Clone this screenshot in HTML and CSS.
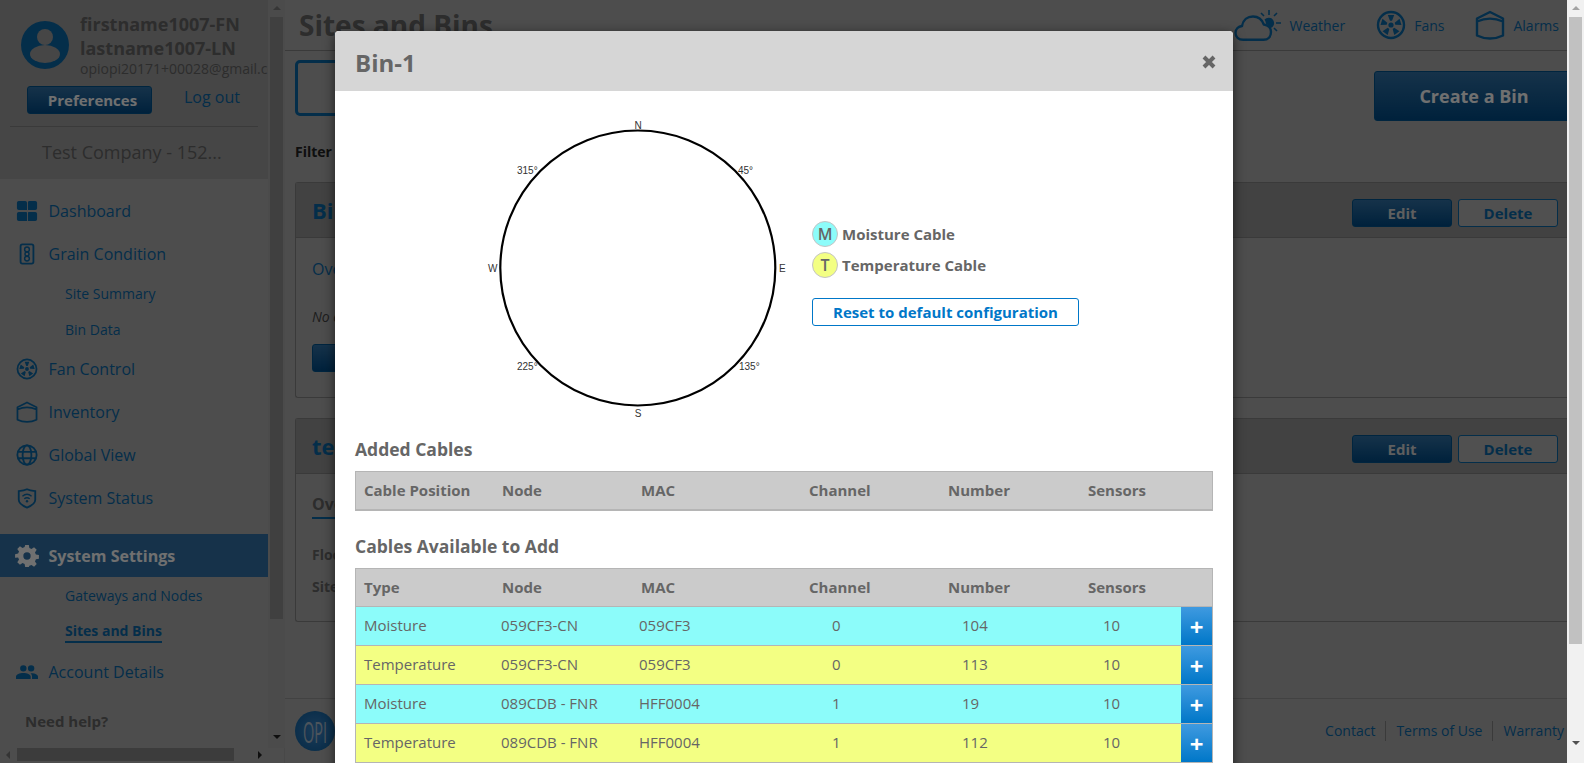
FILE: index.html
```html
<!DOCTYPE html>
<html lang="en-us">
  <head>
    <meta charset="utf-8">
    <title>Sites and Bins</title>
    <link rel="stylesheet" href="styles.css">
  </head>
  <body>
    <svg class="sprites" width="0" height="0">
      <symbol id="i-fan" viewBox="0 0 30 30">
        <circle cx="15" cy="15" r="13" fill="none" stroke="currentColor" stroke-width="2.4"/>
        <circle cx="15" cy="15" r="2.6" fill="currentColor"/>
        <g fill="currentColor">
          <path id="blade" d="M14 10.800 11.800 5H18.200L16 10.800Z"/>
          <use href="#blade" transform="rotate(72 15 15)"/>
          <use href="#blade" transform="rotate(144 15 15)"/>
          <use href="#blade" transform="rotate(216 15 15)"/>
          <use href="#blade" transform="rotate(288 15 15)"/>
        </g>
      </symbol>
      <symbol id="i-bin" viewBox="0 0 30 30">
        <path fill="none" stroke="currentColor" stroke-width="2.4" stroke-linejoin="round" d="M2 8.500 15 2 28 8.500V25.500C24 27.500 20 28.500 15 28.500S6 27.500 2 25.500ZM2 11.500C10 8 20 8 28 11.500"/>
      </symbol>
    </svg>

    <div class="window">
      <div class="page">
        <aside class="sidebar">
          <div class="sidebar-row">
            <div class="sidebar-inner">
              <div class="user-block">
                <div class="user-top">
                  <svg class="avatar" viewBox="0 0 48 48">
                    <circle cx="24" cy="24" r="24" fill="#0b69a8"/>
                    <circle cx="24" cy="16" r="8" fill="#a0a0a0"/>
                    <ellipse cx="24" cy="33" rx="15" ry="9" fill="#a0a0a0"/>
                  </svg>
                  <div class="user-text">
                    <div class="user-name">firstname1007-FN</div>
                    <div class="user-name">lastname1007-LN</div>
                    <div class="user-mail">opiopi20171+00028@gmail.com</div>
                  </div>
                </div>
                <div class="user-actions">
                  <a class="btn btn-fill btn-pref">Preferences</a>
                  <a class="logout">Log out</a>
                </div>
                <div class="user-rule"></div>
                <div class="company">Test Company - 152...</div>
              </div>

              <nav class="nav">
                <a class="nav-item">
                  <svg class="nav-icon" viewBox="0 0 24 24"><path fill="currentColor" d="M3 1h7a2 2 0 0 1 2 2v8H3a2 2 0 0 1-2-2V3a2 2 0 0 1 2-2zM14 1h7a2 2 0 0 1 2 2v6a2 2 0 0 1-2 2h-7a1 1 0 0 1-1-1V3a2 2 0 0 1 1-2zM3 13h8a1 1 0 0 1 1 1v9H3a2 2 0 0 1-2-2v-6a2 2 0 0 1 2-2zM14 13h7a2 2 0 0 1 2 2v6a2 2 0 0 1-2 2h-8v-9a1 1 0 0 1 1-1z"/></svg>
                  Dashboard
                </a>
                <a class="nav-item">
                  <svg class="nav-icon" viewBox="0 0 24 24"><rect x="5" y="1.500" width="14" height="21" rx="2" fill="none" stroke="currentColor" stroke-width="2"/><circle cx="12" cy="7" r="2.600" fill="none" stroke="currentColor" stroke-width="1.600"/><circle cx="12" cy="12" r="2.200" fill="none" stroke="currentColor" stroke-width="1.600"/><circle cx="12" cy="17" r="2.600" fill="none" stroke="currentColor" stroke-width="1.600"/></svg>
                  Grain Condition
                </a>
                <a class="nav-sub">Site Summary</a>
                <a class="nav-sub">Bin Data</a>
                <a class="nav-item">
                  <svg class="nav-icon"><use href="#i-fan"/></svg>
                  Fan Control
                </a>
                <a class="nav-item">
                  <svg class="nav-icon"><use href="#i-bin"/></svg>
                  Inventory
                </a>
                <a class="nav-item">
                  <svg class="nav-icon" viewBox="0 0 24 24"><g fill="none" stroke="currentColor" stroke-width="2"><circle cx="12" cy="12" r="10.500"/><ellipse cx="12" cy="12" rx="4.800" ry="10.500"/><path d="M2 8.500h20M2 15.500h20"/></g></svg>
                  Global View
                </a>
                <a class="nav-item">
                  <svg class="nav-icon" viewBox="0 0 24 24"><path fill="none" stroke="currentColor" stroke-width="2" d="M3 4.500C9 4 12 2.500 12 2.500S15 4 21 4.500V14c0 4-4 6.500-9 8.500-5-2-9-4.500-9-8.500z"/><path fill="none" stroke="currentColor" stroke-width="1.500" d="M7 10c3-2.500 7-2.500 10 0M9 12.800c2-1.400 4-1.400 6 0"/><circle cx="12" cy="15.500" r="1.300" fill="currentColor"/></svg>
                  System Status
                </a>
                <a class="nav-item nav-active">
                  <svg class="nav-icon" viewBox="0 0 24 24"><path fill="currentColor" fill-rule="evenodd" d="M10 0h4l.6 3.300 2.300 1 2.800-1.900 2.900 2.900-1.900 2.800 1 2.300 3.300.6v4l-3.300.6-1 2.300 1.900 2.800-2.900 2.900-2.800-1.900-2.300 1L14 24h-4l-.6-3.300-2.300-1-2.800 1.900-2.900-2.900 1.900-2.800-1-2.300L-1 14v-4l3.300-.6 1-2.300L1.400 4.300 4.300 1.400l2.800 1.900 2.300-1zM12 8a4 4 0 1 0 0 8 4 4 0 0 0 0-8z"/></svg>
                  System Settings
                </a>
                <a class="nav-sub nav-sub-tall">Gateways and Nodes</a>
                <a class="nav-sub"><span class="nav-current">Sites and Bins</span></a>
                <a class="nav-item">
                  <svg class="nav-icon" viewBox="0 0 24 24"><path fill="currentColor" d="M8 4.500a3.500 3.500 0 1 1 0 7 3.500 3.500 0 0 1 0-7zM16.500 4.500a3.500 3.500 0 1 1 0 7 3.500 3.500 0 0 1 0-7zM0 19.500v-2.500c0-2.500 4-4 8-4s8 1.500 8 4v2.500zM17.500 19.500V17c0-1.500-.6-2.700-1.700-3.700 4-.4 8.200 1.100 8.200 3.700v2.500z"/></svg>
                  Account Details
                </a>
                <div class="need-help">Need help?</div>
              </nav>
            </div>
            <div class="vscroll">
              <span class="arrow arrow-up"></span>
              <span class="vscroll-thumb"></span>
              <span class="arrow arrow-down"></span>
            </div>
          </div>
          <div class="hscroll">
            <span class="arrow arrow-left"></span>
            <span class="hscroll-thumb"></span>
            <span class="arrow arrow-right"></span>
          </div>
        </aside>

        <main class="main">
          <header class="topbar">
            <h1 class="page-title">Sites and Bins</h1>
            <div class="top-links">
              <a class="top-link">
                <svg class="weather-icon" viewBox="0 0 47 31">
                  <g fill="none" stroke="currentColor" stroke-width="2.400">
                    <path stroke-linejoin="round" d="M9 29.800C4.500 29.800 1.500 27 1.500 23S4.500 16.500 8 16C9 10 13.500 6.500 19 6.500c5 0 9 3 10.800 8C34 15 37 18 37 22 37 26.500 34 29.800 29.500 29.800Z"/>
                    <path stroke-width="1.600" d="M35 0v5M27 3l3 3M47 13h-5M43 3l-3 3M43 21l-3-3"/>
                  </g>
                  <path fill="currentColor" d="M30.500 9.500A5.500 5.500 0 1 1 36 18.500C35.200 16.500 34 15 32 13.800 31.800 12.300 31.300 10.800 30.500 9.500Z"/>
                </svg>
                Weather
              </a>
              <a class="top-link">
                <svg class="top-icon"><use href="#i-fan"/></svg>
                Fans
              </a>
              <a class="top-link">
                <svg class="top-icon"><use href="#i-bin"/></svg>
                Alarms
              </a>
            </div>
          </header>

          <div class="toolbar">
            <div class="tab-box"></div>
            <a class="btn btn-fill btn-create">Create a Bin</a>
          </div>
          <div class="filter-label">Filter</div>

          <section class="panel">
            <div class="panel-head">
              <h2 class="panel-title">Bin-1</h2>
              <a class="btn btn-fill btn-small">Edit</a>
              <a class="btn btn-line btn-small">Delete</a>
            </div>
            <div class="panel-body body-first">
              <a class="overview-link">Overview</a>
              <p class="panel-note">No cables</p>
              <a class="btn btn-fill btn-add">Add</a>
            </div>
          </section>

          <section class="panel">
            <div class="panel-head">
              <h2 class="panel-title">test</h2>
              <a class="btn btn-fill btn-small">Edit</a>
              <a class="btn btn-line btn-small">Delete</a>
            </div>
            <div class="panel-body body-second">
              <span class="overview-tab">Overview</span>
              <div class="panel-field">Floor</div>
              <div class="panel-field">Site</div>
            </div>
          </section>

          <footer class="footer">
            <div class="logo"><span class="logo-text">OPI</span></div>
            <div class="footer-links">
              <a class="footer-link">Contact</a>
              <a class="footer-link">Terms of Use</a>
              <a class="footer-link">Warranty</a>
            </div>
          </footer>
        </main>

        <div class="backdrop"></div>

        <div class="modal">
          <div class="modal-header">
            <h3 class="modal-title">Bin-1</h3>
            <svg class="modal-close" viewBox="0 0 14 14"><path d="M2 2 12 12M12 2 2 12" stroke="#666" stroke-width="4" fill="none"/></svg>
          </div>
          <div class="modal-body">
            <div class="compass-row">
              <svg class="compass" width="320" height="320" viewBox="0 0 320 320">
                <circle cx="157.800" cy="158" r="137.500" fill="none" stroke="#000" stroke-width="2.200"/>
                <g class="compass-label">
                  <text x="158" y="19" text-anchor="middle">N</text>
                  <text x="158" y="307" text-anchor="middle">S</text>
                  <text x="8" y="162">W</text>
                  <text x="299" y="162">E</text>
                  <text x="37" y="64">315°</text>
                  <text x="258" y="64">45°</text>
                  <text x="37" y="260">225°</text>
                  <text x="259" y="260">135°</text>
                </g>
              </svg>
              <div class="legend">
                <div class="legend-row"><span class="legend-dot dot-m">M</span>Moisture Cable</div>
                <div class="legend-row"><span class="legend-dot dot-t">T</span>Temperature Cable</div>
                <a class="reset-btn">Reset to default configuration</a>
              </div>
            </div>

            <h4 class="section-title">Added Cables</h4>
            <table class="cable-table table-added">
              <colgroup>
                <col class="col-type"><col class="col-node"><col class="col-mac"><col class="col-channel"><col class="col-number"><col class="col-sensors"><col class="col-add">
              </colgroup>
              <thead>
                <tr><th>Cable Position</th><th>Node</th><th>MAC</th><th>Channel</th><th>Number</th><th>Sensors</th><th></th></tr>
              </thead>
            </table>

            <h4 class="section-title section-second">Cables Available to Add</h4>
            <table class="cable-table">
              <colgroup>
                <col class="col-type"><col class="col-node"><col class="col-mac"><col class="col-channel"><col class="col-number"><col class="col-sensors"><col class="col-add">
              </colgroup>
              <thead>
                <tr><th>Type</th><th>Node</th><th>MAC</th><th>Channel</th><th>Number</th><th>Sensors</th><th></th></tr>
              </thead>
              <tbody>
                <tr class="row-m"><td>Moisture</td><td class="td-node">059CF3-CN</td><td class="td-mac">059CF3</td><td class="td-channel">0</td><td class="td-number">104</td><td class="td-sensors">10</td><td class="td-add"><span class="add-btn">+</span></td></tr>
                <tr class="row-t"><td>Temperature</td><td class="td-node">059CF3-CN</td><td class="td-mac">059CF3</td><td class="td-channel">0</td><td class="td-number">113</td><td class="td-sensors">10</td><td class="td-add"><span class="add-btn">+</span></td></tr>
                <tr class="row-m"><td>Moisture</td><td class="td-node">089CDB - FNR</td><td class="td-mac">HFF0004</td><td class="td-channel">1</td><td class="td-number">19</td><td class="td-sensors">10</td><td class="td-add"><span class="add-btn">+</span></td></tr>
                <tr class="row-t"><td>Temperature</td><td class="td-node">089CDB - FNR</td><td class="td-mac">HFF0004</td><td class="td-channel">1</td><td class="td-number">112</td><td class="td-sensors">10</td><td class="td-add"><span class="add-btn">+</span></td></tr>
              </tbody>
            </table>
          </div>
        </div>
      </div>

      <div class="window-scroll">
        <span class="arrow arrow-up"></span>
        <span class="window-thumb"></span>
        <span class="arrow arrow-down"></span>
      </div>
    </div>
  </body>
</html>
```

FILE: styles.css
```css
* {
  box-sizing: border-box;
}
html, body {
  margin: 0;
  padding: 0;
  height: 763px;
  overflow: hidden;
}
body {
  background-color: #b0b0b0;
  color: #666;
  font-family: "Open Sans", "Liberation Sans", sans-serif;
  font-size: 15px;
}
.sprites {
  position: absolute;
}
.window {
  display: flex;
  height: 763px;
}
.page {
  position: relative;
  display: flex;
  flex: 1;
  min-width: 0;
  overflow: hidden;
}

/* sidebar */
.sidebar {
  width: 285px;
  flex-shrink: 0;
  display: flex;
  flex-direction: column;
  border-right: 1px solid #a4a4a4;
}
.sidebar-row {
  display: flex;
  height: 748px;
}
.sidebar-inner {
  width: 268px;
  overflow: hidden;
  flex-shrink: 0;
}
.user-block {
  height: 179px;
  background-color: #a0a0a0;
  padding-top: 12px;
}
.user-top {
  display: flex;
  gap: 11px;
  padding-left: 21px;
  white-space: nowrap;
}
.avatar {
  width: 48px;
  height: 48px;
  margin-top: 9px;
  flex-shrink: 0;
}
.user-name {
  font-size: 18px;
  font-weight: 700;
  line-height: 24px;
}
.user-mail {
  font-size: 14px;
  line-height: 18px;
}
.user-actions {
  display: flex;
  align-items: flex-start;
  margin-top: 8px;
  padding-left: 27px;
}
.btn {
  display: flex;
  align-items: center;
  justify-content: center;
  border-radius: 3px;
  font-size: 15px;
  font-weight: 700;
  flex-shrink: 0;
}
.btn-fill {
  background: linear-gradient(#3273a8, #004c88);
  color: #d8d8d8;
  border: 1px solid #00568f;
}
.btn-line {
  background-color: #b6b6b6;
  color: #0b69a8;
  border: 1px solid #0b69a8;
}
.btn-pref {
  width: 125px;
  height: 28px;
  padding-left: 6px;
  color: #fff;
}
.logout {
  color: #0b69a8;
  font-size: 16px;
  margin-left: 32px;
  line-height: 22px;
}
.user-rule {
  height: 1px;
  background-color: #848484;
  margin: 12px 10px 0;
}
.company {
  color: #666;
  font-size: 18px;
  line-height: 24px;
  margin-top: 13px;
  padding-left: 42px;
}
.nav {
  display: flex;
  flex-direction: column;
  padding-top: 10px;
}
.nav-item {
  display: flex;
  align-items: center;
  height: 43px;
  padding-left: 16px;
  gap: 10.500px;
  color: #0b69a8;
  font-size: 16px;
  white-space: nowrap;
}
.nav-icon {
  width: 22px;
  height: 22px;
  flex-shrink: 0;
  overflow: visible;
}
.nav-active {
  margin-top: 15px;
  background-color: #3273a8;
  color: #fff;
  font-weight: 700;
}
.nav-sub {
  display: flex;
  align-items: center;
  height: 36px;
  padding-left: 65px;
  color: #0b69a8;
  font-size: 14px;
}
.nav-sub-tall {
  height: 37px;
}
.nav-current {
  font-weight: 700;
  border-bottom: 2px solid #0b69a8;
  line-height: 20px;
}
.need-help {
  margin: 17px 0 0 25px;
  font-size: 15px;
  font-weight: 700;
  line-height: 22px;
}

/* scrollbars */
.vscroll {
  width: 17px;
  flex-shrink: 0;
  display: flex;
  flex-direction: column;
  align-items: center;
  background-color: #aaa;
  padding: 6px 0 9px;
}
.vscroll-thumb {
  width: 13px;
  height: 602px;
  margin-top: 7px;
  background-color: #929292;
}
.vscroll .arrow-down {
  margin-top: auto;
}
.hscroll {
  display: flex;
  align-items: center;
  justify-content: space-between;
  width: 268px;
  height: 13px;
  padding: 0 6px;
  background-color: #b0b0b0;
}
.hscroll-thumb {
  width: 217px;
  height: 13px;
  background-color: #8a8a8a;
  margin-right: 18px;
}
.arrow {
  display: block;
  width: 0;
  height: 0;
  flex-shrink: 0;
  border: 4px solid transparent;
}
.arrow-up {
  border-top-width: 0;
  border-bottom: 4px solid #7c7c7c;
}
.arrow-down {
  border-bottom-width: 0;
  border-top: 4px solid #222;
}
.arrow-left {
  border-left-width: 0;
  border-right: 4px solid #777;
}
.arrow-right {
  border-right-width: 0;
  border-left: 4px solid #222;
}
.window-scroll {
  width: 17px;
  flex-shrink: 0;
  display: flex;
  flex-direction: column;
  align-items: center;
  background-color: #f1f1f1;
  padding-top: 6px;
}
.window-scroll .arrow-up {
  border-bottom-color: #a3a3a3;
}
.window-scroll .arrow-down {
  margin-top: 97px;
  border-top-color: #505050;
}
.window-thumb {
  width: 13px;
  height: 627px;
  margin-top: 7px;
  background-color: #c1c1c1;
}

/* main page under the dialog */
.main {
  flex: 1;
  min-width: 0;
  display: flex;
  flex-direction: column;
  overflow: hidden;
}
.topbar {
  display: flex;
  justify-content: space-between;
  align-items: center;
  height: 51px;
  flex-shrink: 0;
  padding: 0 8px 0 14px;
  border-bottom: 1px solid #848484;
}
.page-title {
  margin: 0;
  font-size: 28px;
  font-weight: 700;
  white-space: nowrap;
}
.top-links {
  display: flex;
  gap: 31px;
}
.top-link {
  display: flex;
  align-items: center;
  gap: 8px;
  color: #0b69a8;
  font-size: 14px;
}
.weather-icon {
  width: 47px;
  height: 31px;
}
.top-icon {
  width: 30px;
  height: 30px;
}
.toolbar {
  display: flex;
  justify-content: space-between;
  align-items: flex-start;
  height: 90px;
  flex-shrink: 0;
  padding: 9px 0 0 10px;
}
.tab-box {
  width: 160px;
  height: 56px;
  border: 3px solid #0b69a8;
  border-radius: 5px;
}
.btn-create {
  width: 200px;
  height: 50px;
  margin: 11px -7px 0 0;
  font-size: 18px;
  color: #fff;
}
.filter-label {
  height: 22px;
  margin: 0 0 19px 10px;
  font-size: 14px;
  font-weight: 700;
  line-height: 22px;
  color: #222;
  flex-shrink: 0;
}
.panel {
  margin-left: 10px;
  flex-shrink: 0;
  border: 1px solid #848484;
  border-right: 0;
  border-radius: 3px 0 0 3px;
}
.panel + .panel {
  margin-top: 20px;
}
.panel-head {
  display: flex;
  align-items: center;
  gap: 6px;
  height: 55px;
  padding: 6px 9px 0 16px;
  background-color: #969696;
  border-bottom: 1px solid #848484;
}
.panel-title {
  flex: 1;
  margin: -6px 0 0;
  font-size: 22px;
  font-weight: 700;
  color: #0b69a8;
}
.btn-small {
  width: 100px;
  height: 28px;
}
.panel-body {
  padding-left: 16px;
}
.body-first {
  height: 159px;
  padding-top: 19px;
}
.overview-link {
  display: block;
  color: #0b69a8;
  font-size: 16px;
  line-height: 24px;
}
.panel-note {
  margin: 25px 0 0;
  font-size: 14px;
  font-style: italic;
  line-height: 22px;
  color: #444;
}
.btn-add {
  width: 100px;
  height: 28px;
  margin-top: 16px;
}
.body-second {
  height: 147px;
  padding-top: 18px;
}
.overview-tab {
  display: inline-block;
  font-size: 16px;
  font-weight: 700;
  line-height: 18px;
  padding: 3px 0 4px;
  border-bottom: 2px solid #0b69a8;
}
.panel-field {
  margin-top: 10px;
  font-size: 14px;
  font-weight: 700;
  line-height: 22px;
}
.panel-field:first-of-type {
  margin-top: 25px;
}
.footer {
  display: flex;
  align-items: center;
  justify-content: space-between;
  height: 65px;
  margin-top: auto;
  padding: 0 3px 0 10px;
  border-top: 1px solid #969696;
}
.logo {
  display: flex;
  align-items: center;
  justify-content: center;
  width: 40px;
  height: 40px;
  border-radius: 50%;
  background: radial-gradient(#3f86c8, #0b5f9e);
}
.logo-text {
  color: #b0c0d0;
  font-size: 29px;
  transform: scaleX(.5);
}
.footer-links {
  display: flex;
  align-items: center;
}
.footer-link {
  color: #0b69a8;
  font-size: 14px;
  padding: 0 10px;
  line-height: 20px;
  border-left: 1px solid #848484;
}
.footer-link:first-child {
  border-left: 0;
}
.footer-link:last-child {
  padding-right: 0;
}

/* dialog */
.backdrop {
  position: absolute;
  inset: 0;
  background-color: rgba(0, 0, 0, .56);
}
.modal {
  position: absolute;
  top: 31px;
  left: 335px;
  width: 898px;
  height: 760px;
  background-color: #fff;
  border-radius: 4px 4px 0 0;
  box-shadow: 0 3px 12px rgba(0, 0, 0, .6);
}
.modal-header {
  display: flex;
  align-items: center;
  justify-content: space-between;
  height: 60px;
  padding: 0 17px 0 20px;
  background-color: #d6d6d6;
  border-radius: 4px 4px 0 0;
}
.modal-title {
  margin: 2px 0 0;
  font-size: 24px;
  font-weight: 700;
  color: #666;
}
.modal-close {
  width: 14px;
  height: 14px;
  margin-top: 2px;
}
.modal-body {
  padding: 19px 20px 0;
}
.compass-row {
  display: flex;
  margin-left: 125px;
  gap: 12px;
}
.compass {
  flex-shrink: 0;
}
.compass-label {
  font-family: "Liberation Sans", Arial, sans-serif;
  font-size: 10px;
  fill: #333;
}
.legend {
  padding-top: 108.500px;
}
.legend-row {
  display: flex;
  align-items: center;
  gap: 4px;
  height: 31px;
  font-size: 15px;
  font-weight: 700;
}
.legend-dot {
  display: flex;
  align-items: center;
  justify-content: center;
  width: 26px;
  height: 26px;
  border-radius: 50%;
  border: 1px solid #c4c4c4;
  font-size: 16px;
  font-weight: 600;
}
.dot-m {
  background-color: #8cfcfa;
}
.dot-t {
  background-color: #f3ff83;
}
.reset-btn {
  display: flex;
  align-items: center;
  justify-content: center;
  width: 267px;
  height: 28px;
  margin-top: 17.500px;
  border: 1px solid #0077c8;
  border-radius: 3px;
  color: #0077c8;
  font-size: 15px;
  font-weight: 700;
}
.section-title {
  margin: 8px 0 11px;
  font-size: 17.500px;
  font-weight: 700;
  line-height: 22px;
}
.section-second {
  margin-top: 24px;
}
.cable-table {
  width: 858px;
  table-layout: fixed;
  border-collapse: separate;
  border-spacing: 0;
  border: 1px solid #b5b5b5;
  border-bottom-width: 0;
}
.table-added {
  border-bottom: 2px solid #b5b5b5;
}
.table-added th {
  height: 36px;
}
.col-type { width: 138px; }
.col-node { width: 139px; }
.col-mac { width: 168px; }
.col-channel { width: 139px; }
.col-number { width: 140px; }
.col-sensors { width: 101px; }
.col-add { width: 31px; }
.cable-table th {
  height: 37px;
  padding: 0 0 2px 8px;
  background-color: #cbcbcb;
  font-weight: 700;
  text-align: left;
  white-space: nowrap;
}
.cable-table td {
  height: 39px;
  padding: 0 0 2px 8px;
  border-top: 1px solid #b5b5b5;
  white-space: nowrap;
}
.cable-table tr:last-child td {
  border-bottom: 1px solid #b5b5b5;
}
.row-m {
  background-color: #8cfcfa;
}
.row-t {
  background-color: #f3ff83;
}
.cable-table .td-node {
  padding-left: 7px;
}
.cable-table .td-mac {
  padding-left: 6px;
}
.cable-table .td-channel {
  padding-left: 31px;
}
.cable-table .td-number {
  padding-left: 22px;
}
.cable-table .td-sensors {
  padding-left: 23px;
}
.cable-table .td-add {
  padding: 0;
}
.add-btn {
  display: flex;
  align-items: center;
  justify-content: center;
  height: 38px;
  background: linear-gradient(#3f9ae0, #0077c8);
  color: #fff;
  font-size: 24px;
  font-weight: 700;
}
```
